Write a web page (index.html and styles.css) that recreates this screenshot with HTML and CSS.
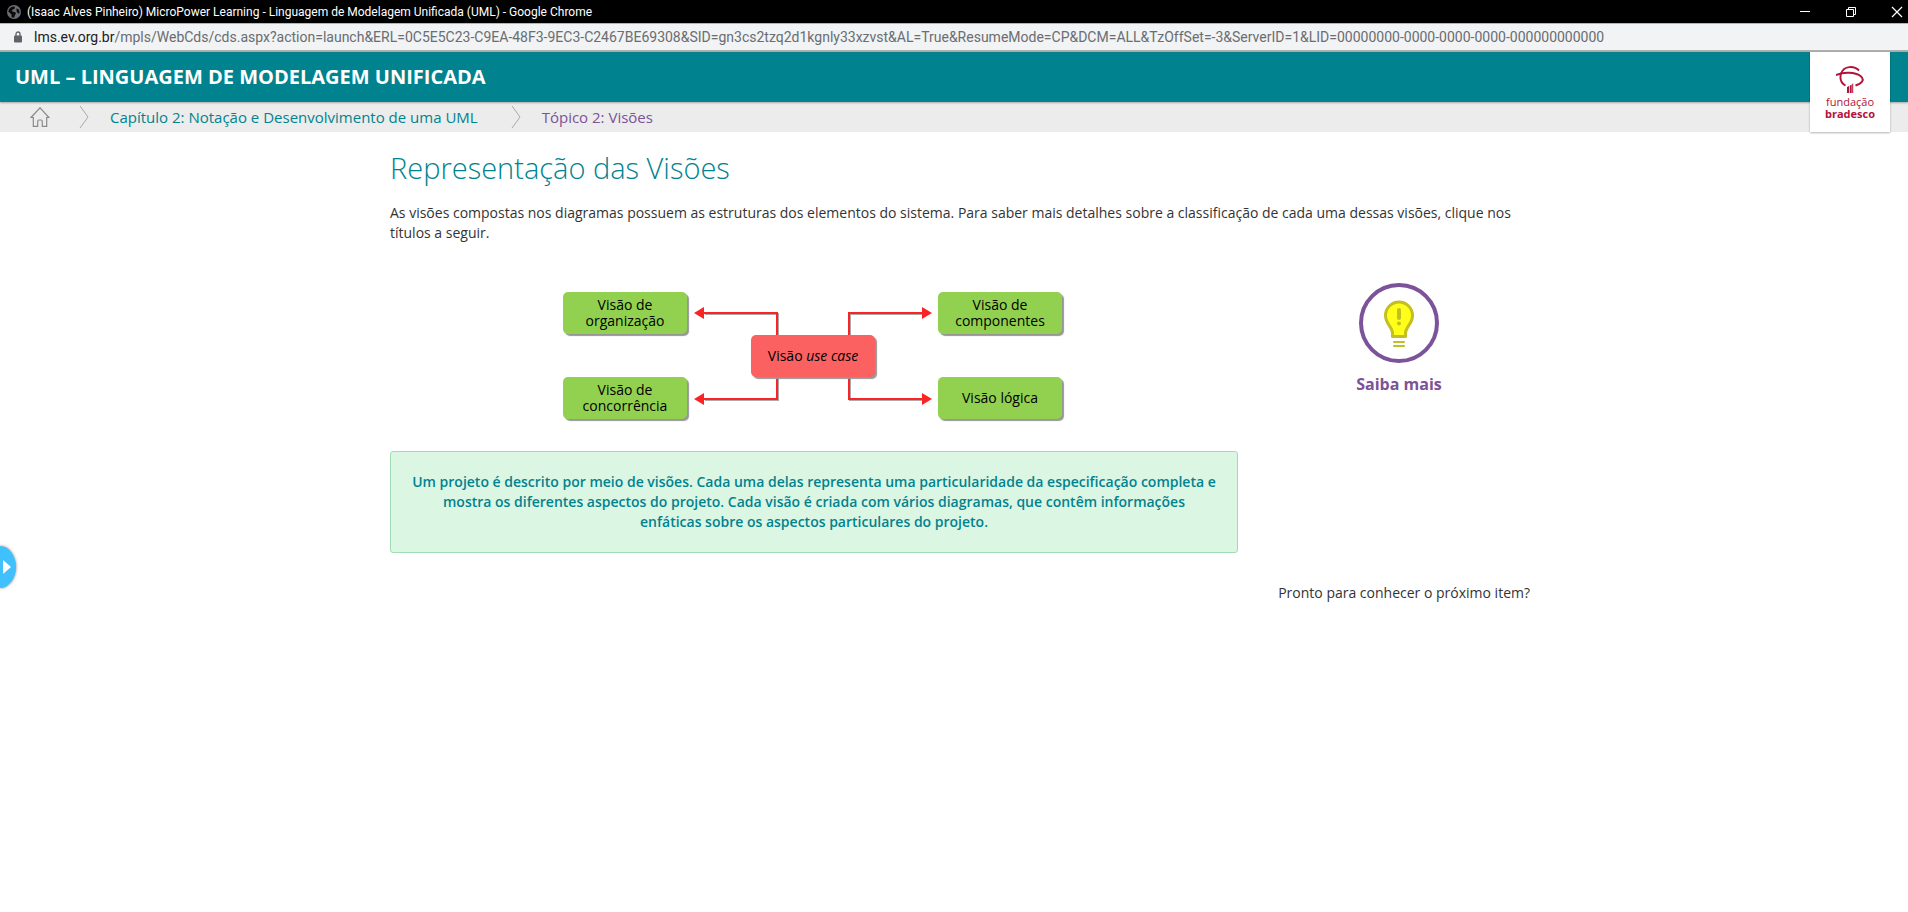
FILE: index.html
```html
<!DOCTYPE html>
<html lang="pt-BR">
<head>
<meta charset="utf-8">
<title>MicroPower Learning - Linguagem de Modelagem Unificada (UML)</title>
<link rel="stylesheet" href="styles.css">
</head>
<body>
<div class="titlebar">
  <svg class="globe" viewBox="0 0 14 14" width="14" height="14" aria-hidden="true"><circle cx="7" cy="7" r="7" fill="#6a6e73"/><path d="M6 1.500 8 1.800 7.500 4 5.500 4.500 5 6.500 8 7 9 8.500 8 10 7 12.800A6 6 0 0 1 4.500 12V9.500L1.300 6.500A6 6 0 0 1 6 1.500ZM9.500 3.200 12 4.800 12.700 8 11.200 8.500 9.600 6.500Z" fill="#0b0b0b"/></svg>
  <span class="window-title">(Isaac Alves Pinheiro) MicroPower Learning - Linguagem de Modelagem Unificada (UML) - Google Chrome</span>
  <div class="window-controls">
    <button type="button" aria-label="Minimizar"><svg viewBox="0 0 12 12" width="12" height="12"><path d="M1 5.500H11" stroke="#fff"/></svg></button>
    <button type="button" aria-label="Restaurar"><svg viewBox="0 0 12 12" width="12" height="12"><path d="M1.500 3.500H8.500V10.500H1.500ZM3.500 3.500V1.500H10.500V8.500H8.500" fill="none" stroke="#fff"/></svg></button>
    <button type="button" aria-label="Fechar"><svg viewBox="0 0 12 12" width="12" height="12"><path d="M1 1 11 11M11 1 1 11" stroke="#fff" stroke-width="1.200"/></svg></button>
  </div>
</div>
<div class="addressbar">
  <svg viewBox="0 0 8 12" width="8" height="12" aria-hidden="true"><path d="M2 5V3a2 2 0 0 1 4 0v2" fill="none" stroke="#5f6368" stroke-width="1.300"/><rect y="4.500" width="8" height="7" rx="1" fill="#5f6368"/></svg>
  <span class="url"><span class="host">lms.ev.org.br</span>/mpls/WebCds/cds.aspx?action=launch&amp;ERL=0C5E5C23-C9EA-48F3-9EC3-C2467BE69308&amp;SID=gn3cs2tzq2d1kgnly33xzvst&amp;AL=True&amp;ResumeMode=CP&amp;DCM=ALL&amp;TzOffSet=-3&amp;ServerID=1&amp;LID=00000000-0000-0000-0000-000000000000</span>
</div>
<header class="course">
  <span class="course-title">UML – LINGUAGEM DE MODELAGEM UNIFICADA</span>
  <a class="brand" href="#">
    <svg viewBox="0 0 28 27" width="28" height="27" aria-hidden="true"><g fill="none" stroke="#b3123a"><path d="M0 9C8 5.500 19 6 24.500 10c5 4 1 7.500-5 9.500" stroke-width="2"/><path d="M23 4.500C18-0.500 8-0.500 5 7.500 3.500 13 5 17 9.500 19.500" stroke-width="1.900"/></g><path d="M11 21 13 20V27H11ZM13.700 19.700 15.700 18.500V27H13.700ZM16.200 18 17.200 17.300V27H16.200Z" fill="#b3123a"/></svg>
    <span class="brand-top">fundação</span>
    <span class="brand-bottom">bradesco</span>
  </a>
</header>
<nav class="crumbs" aria-label="Navegação">
  <a href="#" class="home" aria-label="Início"><svg viewBox="0 0 20 20" width="20" height="20"><path d="M1 10.500 10 0.800 19 10.500H16.700V19.400H12.300V14.500q0-1.500-1.300-1.500h-2q-1.300 0-1.300 1.500V19.400H3.300V10.500Z" fill="none" stroke="#8a8a8a" stroke-width="1.200"/></svg></a>
  <svg class="sep" viewBox="0 0 10 22" width="10" height="22" aria-hidden="true"><path d="M1 0 9 11 1 22" fill="none" stroke="#a9a9a9"/></svg>
  <a href="#" class="chapter">Capítulo 2: Notação e Desenvolvimento de uma UML</a>
  <svg class="sep second" viewBox="0 0 10 22" width="10" height="22" aria-hidden="true"><path d="M1 0 9 11 1 22" fill="none" stroke="#a9a9a9"/></svg>
  <a href="#" class="topic">Tópico 2: Visões</a>
</nav>
<main class="content">
  <h1>Representação das Visões</h1>
  <p class="intro">As visões compostas nos diagramas possuem as estruturas dos elementos do sistema. Para saber mais detalhes sobre a classificação de cada uma dessas visões, clique nos títulos a seguir.</p>
  <div class="columns">
    <div class="primary">
      <div class="diagram">
        <svg class="links" viewBox="0 0 502 130" width="502" height="130" aria-hidden="true">
          <path d="M141 21H214V107H141M360 21H286V107H360" transform="translate(1 1)" fill="none" stroke="#aaa" stroke-width="2"/>
          <path d="M141 21H214V107H141M360 21H286V107H360" fill="none" stroke="#fa2424" stroke-width="2"/>
          <path d="M131 21 141 15V27ZM131 107 141 101V113ZM369 21 359 15V27ZM369 107 359 101V113Z" fill="#fa2424"/>
        </svg>
        <button type="button" class="node organization">Visão de organização</button>
        <button type="button" class="node components">Visão de componentes</button>
        <button type="button" class="node usecase"><span>Visão <em>use case</em></span></button>
        <button type="button" class="node concurrency">Visão de concorrência</button>
        <button type="button" class="node logical">Visão lógica</button>
      </div>
      <p class="callout">Um projeto é descrito por meio de visões. Cada uma delas representa uma particularidade da especificação completa e mostra os diferentes aspectos do projeto. Cada visão é criada com vários diagramas, que contêm informações enfáticas sobre os aspectos particulares do projeto.</p>
    </div>
    <aside class="extra">
      <a class="more" href="#">
        <span class="more-ring"><svg viewBox="0 0 32 48" width="32" height="48" aria-hidden="true"><path d="M9.500 37.500V34C9.500 28 2.500 25 2.500 16.500a13.500 13.500 0 0 1 27 0C29.500 25 22.500 28 22.500 34V37.500Z" fill="#ffff1a" stroke="#c3be21" stroke-width="3" stroke-linejoin="round"/><path d="M16 11V19M16 24.500V24.600" stroke="#c3be21" stroke-width="4" stroke-linecap="round"/><path d="M11 43H21M11 47H21" stroke="#c3be21" stroke-width="2" stroke-linecap="round"/></svg></span>
        <span>Saiba mais</span>
      </a>
    </aside>
  </div>
  <p class="next">Pronto para conhecer o próximo item?</p>
</main>
<button type="button" class="drawer" aria-label="Abrir menu"><svg viewBox="0 0 8 14" width="8" height="14"><path d="M0 0 8 7 0 14Z" fill="#fff"/></svg></button>
</body>
</html>
```
FILE: styles.css
```css
* { box-sizing: border-box; }
body {
  margin: 0;
  min-height: 100vh;
  background: #fff;
  color: #333;
  font: 14px/20px "Open Sans", "Noto Sans", sans-serif;
}
button { border: 0; padding: 0; background: none; color: inherit; font: inherit; cursor: pointer; }
a { text-decoration: none; }
svg { display: block; flex: none; }

.titlebar {
  display: flex;
  align-items: center;
  gap: 6px;
  height: 23px;
  padding: 0 5px 0 7px;
  background: #000;
  color: #fff;
  font-family: Roboto, "Open Sans", sans-serif;
  font-size: 12px;
}
.window-controls { display: flex; gap: 34px; margin-left: auto; }
.window-controls button { width: 12px; height: 12px; }
.addressbar {
  display: flex;
  align-items: center;
  gap: 12px;
  height: 29px;
  padding: 0 14px;
  border-top: 1px solid #b4b4b4;
  border-bottom: 2px solid #b0b0b0;
  background: #f1f3f4;
  color: #6a6d71;
  font-family: Roboto, "Open Sans", sans-serif;
  white-space: nowrap;
}
.host { color: #202124; }

.course {
  position: relative;
  display: flex;
  align-items: center;
  height: 50px;
  padding: 0 15px;
  background: #00838f;
  box-shadow: 0 1px 2px rgba(0, 0, 0, .3);
  z-index: 1;
}
.course-title { color: #fff; font-size: 20px; font-weight: 700; }
.brand {
  position: absolute;
  top: 0;
  right: 18px;
  display: flex;
  flex-direction: column;
  align-items: center;
  width: 80px;
  height: 80px;
  padding-top: 14px;
  background: #fff;
  box-shadow: 0 1px 2px rgba(0, 0, 0, .3);
  color: #b3123a;
  font-size: 11px;
  line-height: 12px;
}
.brand-top { margin-top: 3px; }
.brand-bottom { font-weight: 700; }
.crumbs {
  display: flex;
  align-items: center;
  height: 30px;
  padding: 0 30px;
  background: #ececec;
  font-size: 15px;
}
.sep { margin: 0 21px 0 29px; }
.sep.second { margin-left: 33px; }
.chapter { color: #00838f; }
.topic { color: #7c5299; }

.content { width: min(100%, 1152px); margin: 0 auto; padding: 16px 0 0 12px; }
h1 { margin: 0; color: #00838f; font-size: 29px; line-height: 40px; font-weight: 300; }
.intro { margin: 15px 0 0; }
.columns { display: grid; grid-template-columns: 848fr 262fr; gap: 30px; margin-top: 40px; }
.primary { display: flex; flex-direction: column; align-items: center; padding-top: 9px; }
.diagram { position: relative; width: 502px; height: 130px; }
.links { position: absolute; inset: 0; }
.node {
  position: absolute;
  width: 124px;
  height: 42px;
  padding: 0 16px;
  border-radius: 5px;
  background: #92d050;
  box-shadow: 2px 2px 1px #969696;
  color: #000;
  line-height: 16px;
}
.organization { left: 0; top: 0; }
.components { left: 375px; top: 0; }
.usecase { left: 188px; top: 43px; padding: 0; background: #fb6161; }
.concurrency { left: 0; top: 85px; }
.logical { left: 375px; top: 85px; }
.callout {
  width: 100%;
  margin: 29px 0 0;
  padding: 20px;
  border: 1px solid #a0dcb4;
  border-radius: 3px;
  background: #dcf6e4;
  color: #00838f;
  font-weight: 600;
  text-align: center;
}
.extra { text-align: center; }
.more {
  display: inline-flex;
  flex-direction: column;
  align-items: center;
  gap: 11px;
  color: #7c5299;
  font-size: 16px;
  font-weight: 700;
}
.more-ring {
  display: grid;
  place-items: center;
  width: 80px;
  height: 80px;
  border: 4px solid #7c5299;
  border-radius: 50%;
}
.next { margin: 30px 0 0; text-align: right; }
.drawer {
  position: fixed;
  left: 0;
  top: 546px;
  width: 16px;
  height: 42px;
  padding-left: 3px;
  border-radius: 0 16px 16px 0 / 0 21px 21px 0;
  background: #40c0fc;
  box-shadow: 0 0 3px rgba(0, 0, 0, .5);
}
```
